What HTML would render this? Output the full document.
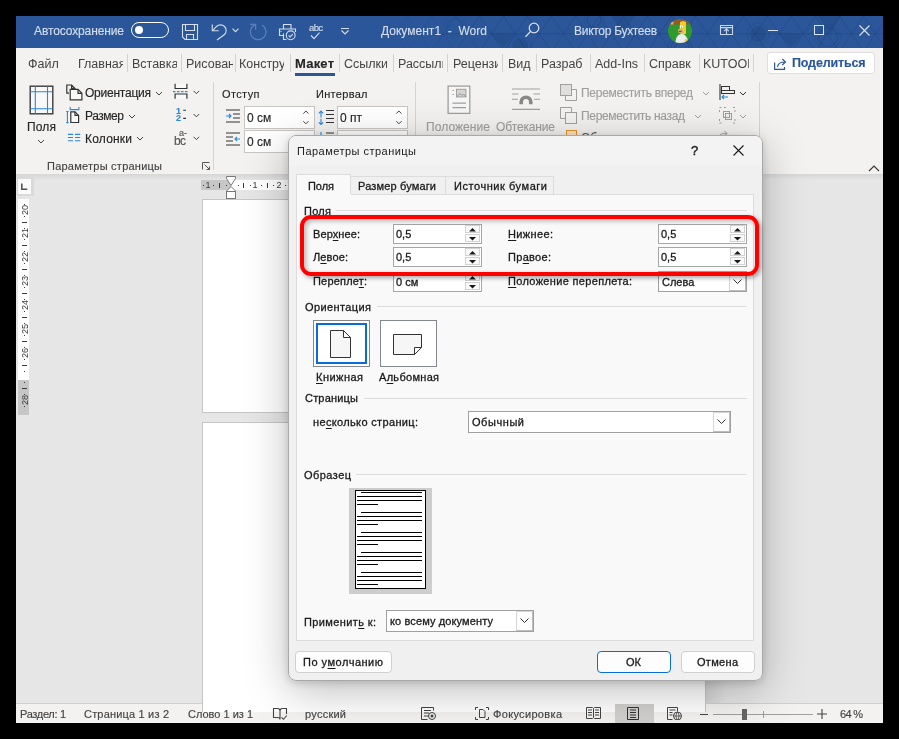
<!DOCTYPE html><html><head><meta charset="utf-8"><style>
html,body{margin:0;padding:0;background:#000;width:899px;height:739px;overflow:hidden;position:relative;font-family:"Liberation Sans",sans-serif;}
.t{position:absolute;white-space:pre;will-change:transform;}
.r{position:absolute;}
u{text-decoration:underline;text-underline-offset:2px;text-decoration-thickness:1px;}
</style></head><body>
<div class="r" style="left:16px;top:16px;width:867px;height:707px;background:#e6e6e6;"></div>
<div class="r" style="left:16px;top:16px;width:867px;height:32px;background:#2b579a;"></div>
<div class="r" style="left:16px;top:48px;width:867px;height:126px;background:#f3f2f1;"></div>
<div class="r" style="left:16px;top:174px;width:867px;height:6px;background:linear-gradient(#d6d6d6,#e6e6e6);"></div>
<div class="r" style="left:16px;top:703px;width:867px;height:20px;background:#f3f2f1;border-top:1px solid #d2d0ce;box-sizing:border-box;"></div>
<svg class="r" style="left:363px;top:16px;" width="520" height="32" viewBox="0 0 520 32"><defs><linearGradient id="pg" x1="0" x2="1"><stop offset="0" stop-color="#fff" stop-opacity="0"/><stop offset="0.25" stop-color="#fff" stop-opacity="1"/></linearGradient><mask id="pm"><rect x="0" y="16" width="520" height="32" fill="url(#pg)"/></mask></defs><g mask="url(#pm)" transform="translate(0,-16)"><path d="M323.4 33.8L335.4 16 M323.4 33.8L311.4 16 M323.4 33.8L332.8 48 M323.4 33.8L314.0 48 M347.4 33.8L359.4 16 M347.4 33.8L335.4 16 M347.4 33.8L356.8 48 M347.4 33.8L338.0 48 M371.4 33.8L383.4 16 M371.4 33.8L359.4 16 M371.4 33.8L380.8 48 M371.4 33.8L362.0 48 M395.4 33.8L407.4 16 M395.4 33.8L383.4 16 M395.4 33.8L404.8 48 M395.4 33.8L386.0 48 M419.4 33.8L431.4 16 M419.4 33.8L407.4 16 M419.4 33.8L428.8 48 M419.4 33.8L410.0 48 M443.4 33.8L455.4 16 M443.4 33.8L431.4 16 M443.4 33.8L452.8 48 M443.4 33.8L434.0 48 M467.4 33.8L479.4 16 M467.4 33.8L455.4 16 M467.4 33.8L476.8 48 M467.4 33.8L458.0 48 M491.4 33.8L503.4 16 M491.4 33.8L479.4 16 M491.4 33.8L500.8 48 M491.4 33.8L482.0 48 M515.4 33.8L527.4 16 M515.4 33.8L503.4 16 M515.4 33.8L524.8 48 M515.4 33.8L506.0 48 M539.4 33.8L551.4 16 M539.4 33.8L527.4 16 M539.4 33.8L548.8 48 M539.4 33.8L530.0 48 M563.4 33.8L575.4 16 M563.4 33.8L551.4 16 M563.4 33.8L572.8 48 M563.4 33.8L554.0 48 M587.4 33.8L599.4 16 M587.4 33.8L575.4 16 M587.4 33.8L596.8 48 M587.4 33.8L578.0 48 M611.4 33.8L623.4 16 M611.4 33.8L599.4 16 M611.4 33.8L620.8 48 M611.4 33.8L602.0 48 M635.4 33.8L647.4 16 M635.4 33.8L623.4 16 M635.4 33.8L644.8 48 M635.4 33.8L626.0 48 M659.4 33.8L671.4 16 M659.4 33.8L647.4 16 M659.4 33.8L668.8 48 M659.4 33.8L650.0 48 M683.4 33.8L695.4 16 M683.4 33.8L671.4 16 M683.4 33.8L692.8 48 M683.4 33.8L674.0 48 M707.4 33.8L719.4 16 M707.4 33.8L695.4 16 M707.4 33.8L716.8 48 M707.4 33.8L698.0 48 M731.4 33.8L743.4 16 M731.4 33.8L719.4 16 M731.4 33.8L740.8 48 M731.4 33.8L722.0 48 M755.4 33.8L767.4 16 M755.4 33.8L743.4 16 M755.4 33.8L764.8 48 M755.4 33.8L746.0 48 M779.4 33.8L791.4 16 M779.4 33.8L767.4 16 M779.4 33.8L788.8 48 M779.4 33.8L770.0 48 M803.4 33.8L815.4 16 M803.4 33.8L791.4 16 M803.4 33.8L812.8 48 M803.4 33.8L794.0 48 M827.4 33.8L839.4 16 M827.4 33.8L815.4 16 M827.4 33.8L836.8 48 M827.4 33.8L818.0 48 M851.4 33.8L863.4 16 M851.4 33.8L839.4 16 M851.4 33.8L860.8 48 M851.4 33.8L842.0 48 M875.4 33.8L887.4 16 M875.4 33.8L863.4 16 M875.4 33.8L884.8 48 M875.4 33.8L866.0 48 M899.4 33.8L911.4 16 M899.4 33.8L887.4 16 M899.4 33.8L908.8 48 M899.4 33.8L890.0 48 M923.4 33.8L935.4 16 M923.4 33.8L911.4 16 M923.4 33.8L932.8 48 M923.4 33.8L914.0 48  M0 33.8H900" stroke="#1c3f77" stroke-opacity=".4" stroke-width="1" fill="none" transform="translate(-363,0)"/><circle cx="395" cy="34" r="8" fill="#1c3f77" fill-opacity=".32"/><circle cx="395" cy="34" r="11" fill="none" stroke="#1c3f77" stroke-opacity=".25"/><circle cx="465" cy="37" r="9.5" fill="none" stroke="#1c3f77" stroke-opacity=".4" stroke-width="1.2"/><circle cx="465" cy="37" r="12.5" fill="none" stroke="#1c3f77" stroke-opacity=".22"/><circle cx="231" cy="20" r="7" fill="none" stroke="#1c3f77" stroke-opacity=".4" stroke-width="1.2"/><circle cx="231" cy="20" r="10" fill="none" stroke="#1c3f77" stroke-opacity=".22"/><circle cx="317" cy="48" r="9" fill="none" stroke="#1c3f77" stroke-opacity=".4" stroke-width="1.2"/><circle cx="317" cy="48" r="12" fill="none" stroke="#1c3f77" stroke-opacity=".22"/><circle cx="92" cy="26" r="8" fill="none" stroke="#1c3f77" stroke-opacity=".4" stroke-width="1.2"/><circle cx="92" cy="26" r="11" fill="none" stroke="#1c3f77" stroke-opacity=".22"/><circle cx="157" cy="46" r="8" fill="#1c3f77" fill-opacity=".32"/><circle cx="157" cy="46" r="11" fill="none" stroke="#1c3f77" stroke-opacity=".25"/><path d="M416 33.8L440 33.8L428 48Z" fill="#1c3f77" fill-opacity=".3"/><path d="M455 16L479 16L467 33.8Z" fill="#1c3f77" fill-opacity=".3"/><path d="M248 16L272 16L260 33.8Z" fill="#1c3f77" fill-opacity=".3"/><path d="M128 33.8L152 33.8L140 48Z" fill="#1c3f77" fill-opacity=".3"/></g></svg>
<div class="t" style="left:34.0px;top:24.84px;font-size:12px;line-height:12px;color:#d3ddeb;letter-spacing:-0.113px;-webkit-text-stroke-width:0.15px;">Автосохранение</div>
<div class="r" style="left:131px;top:22px;width:38px;height:16px;border:1.3px solid #fff;border-radius:8px;box-sizing:border-box;"></div>
<div class="r" style="left:135px;top:26px;width:8px;height:8px;background:#fff;border-radius:50%;"></div>
<svg class="r" style="left:181px;top:23px;" width="18" height="18" viewBox="0 0 18 18"><path d="M1.5 1.5H16.5V16.5H4L1.5 14Z M4.5 1.5V7.5H13.5V1.5 M5.5 16.5V11.5H12.5V16.5" fill="none" stroke="#d5deeb" stroke-width="1.1"/></svg>
<svg class="r" style="left:210px;top:22px;" width="20" height="20" viewBox="0 0 20 20"><path d="M2.3 2.4V8.8H8.7" fill="none" stroke="#d5deeb" stroke-width="1.1"/><path d="M2.5 8.8L6.5 4.5A5.5 5.5 0 0 1 14.5 12.5L7 18" fill="none" stroke="#d5deeb" stroke-width="1.1"/></svg>
<svg class="r" style="left:231px;top:27px;" width="9" height="7" viewBox="0 0 9 7"><path d="M1.5 1.7l3 3 3-3" fill="none" stroke="#d5deeb" stroke-width="1.1"/></svg>
<svg class="r" style="left:246px;top:20px;" width="24" height="24" viewBox="0 0 24 24"><path d="M16.2 5.2A7.8 7.8 0 1 1 9.4 4.6 M4.1 4.4H9.6V9.7" fill="none" stroke="#5a80ba" stroke-width="1.2"/></svg>
<svg class="r" style="left:278px;top:23px;" width="19" height="18" viewBox="0 0 19 18"><path d="M5.5 6V1.5h7.5V6 M5.5 12.5H1.5V6h16v3 M5.5 10.5v6h3" fill="none" stroke="#d5deeb" stroke-width="1.1"/><circle cx="3" cy="8.3" r=".6" fill="#d5deeb"/><circle cx="12.7" cy="12.3" r="4.4" fill="#2b579a" stroke="#d5deeb" stroke-width="1.1"/><path d="M10.6 12.4l1.5 1.5 2.7-2.8" fill="none" stroke="#d5deeb" stroke-width="1.1"/></svg>
<div class="t" style="left:308.5px;top:22.76px;font-size:9.5px;line-height:9.5px;color:#d5deeb;letter-spacing:-0.658px;-webkit-text-stroke-width:0.15px;">abc</div>
<svg class="r" style="left:310px;top:32px;" width="12" height="8" viewBox="0 0 12 8"><path d="M1 3.5l3 3.2 5.5-6" fill="none" stroke="#d5deeb" stroke-width="1.1"/></svg>
<svg class="r" style="left:340px;top:27px;" width="10" height="8" viewBox="0 0 10 8"><path d="M1 1.5h8 M1.5 3.5l3.5 3.5 3.5-3.5" fill="none" stroke="#d5deeb" stroke-width="1.1"/></svg>
<div class="t" style="left:381.0px;top:24.84px;font-size:12px;line-height:12px;color:#d3ddeb;letter-spacing:0.018px;-webkit-text-stroke-width:0.15px;">Документ1  -  Word</div>
<svg class="r" style="left:524px;top:22px;" width="16" height="17" viewBox="0 0 16 17"><circle cx="10" cy="6" r="4.8" fill="none" stroke="#dbe3ef" stroke-width="1.2"/><path d="M6.6 9.4L1.5 14.8" stroke="#dbe3ef" stroke-width="1.3"/></svg>
<div class="t" style="left:574.0px;top:24.84px;font-size:12px;line-height:12px;color:#d3ddeb;letter-spacing:-0.284px;-webkit-text-stroke-width:0.15px;">Виктор Бухтеев</div>
<svg class="r" style="left:668px;top:19px;" width="24" height="24" viewBox="0 0 24 24"><defs><clipPath id="av"><circle cx="12" cy="12" r="12"/></clipPath></defs><g clip-path="url(#av)"><rect width="24" height="24" fill="#2e9a2e"/><rect width="24" height="5.5" fill="#8f5a2e"/><rect x="2.5" y="2.5" width="3" height="3" fill="#d8a878"/><path d="M12 3.2C13 2.2 17 2 18 3.2V14.5C17.5 15.5 14 16 12.5 15V13.5L11 11.5 11.8 9.5Z" fill="#f2cc30"/><path d="M10.2 10.2C11 9.6 14 9.7 15 10.5V13.8C14 14.5 11 14.4 10.2 13.5Z" fill="#d2b070"/><path d="M11 12.4h2.5" stroke="#3a2a10" stroke-width=".8"/><ellipse cx="13.3" cy="7.7" rx="1.6" ry="1.5" fill="#fff"/><circle cx="13.6" cy="7.9" r=".5" fill="#222"/><path d="M7.4 24C7.8 18 10 15 13.5 15S19.6 18 19.9 24Z" fill="#ecebf2"/><path d="M16.5 20.5L19.8 19.5 19.8 23 16.8 23Z" fill="#f2cc30"/></g></svg>
<svg class="r" style="left:719px;top:24px;" width="15" height="12" viewBox="0 0 15 12"><path d="M1.5 1.5h12v9h-12z M1.5 3.6h12 M7.5 10.5V4.8 M5.2 7.1L7.5 4.8 9.8 7.1" fill="none" stroke="#c9d5e8" stroke-width="1.1"/></svg>
<div class="r" style="left:768px;top:30px;width:10px;height:1px;background:#dbe3ef;"></div>
<div class="r" style="left:814px;top:25px;width:10px;height:10px;border:1px solid #dbe3ef;box-sizing:border-box;"></div>
<svg class="r" style="left:859px;top:25px;" width="11" height="11" viewBox="0 0 11 11"><path d="M.5 .5l10 10 M10.5 .5l-10 10" stroke="#dbe3ef" stroke-width="1.1"/></svg>
<div class="t" style="left:28px;top:53px;width:30px;overflow:hidden;font-size:12.5px;line-height:22px;color:#444;">Файл</div>
<div class="t" style="left:78px;top:53px;width:45px;overflow:hidden;font-size:12.5px;line-height:22px;color:#444;">Главная</div>
<div class="r" style="left:127px;top:54px;width:1px;height:18px;background:#d4d2d0;"></div>
<div class="t" style="left:132px;top:53px;width:45px;overflow:hidden;font-size:12.5px;line-height:22px;color:#444;">Вставка</div>
<div class="r" style="left:181px;top:54px;width:1px;height:18px;background:#d4d2d0;"></div>
<div class="t" style="left:186px;top:53px;width:47px;overflow:hidden;font-size:12.5px;line-height:22px;color:#444;">Рисован</div>
<div class="r" style="left:235px;top:54px;width:1px;height:18px;background:#d4d2d0;"></div>
<div class="t" style="left:239px;top:53px;width:45px;overflow:hidden;font-size:12.5px;line-height:22px;color:#444;">Констру</div>
<div class="r" style="left:290px;top:54px;width:1px;height:18px;background:#d4d2d0;"></div>
<div class="t" style="left:344px;top:53px;width:43px;overflow:hidden;font-size:12.5px;line-height:22px;color:#444;">Ссылки</div>
<div class="r" style="left:339px;top:54px;width:1px;height:18px;background:#d4d2d0;"></div>
<div class="t" style="left:398px;top:53px;width:45px;overflow:hidden;font-size:12.5px;line-height:22px;color:#444;">Рассылк</div>
<div class="r" style="left:393px;top:54px;width:1px;height:18px;background:#d4d2d0;"></div>
<div class="t" style="left:453px;top:53px;width:45px;overflow:hidden;font-size:12.5px;line-height:22px;color:#444;">Рецензи</div>
<div class="r" style="left:447px;top:54px;width:1px;height:18px;background:#d4d2d0;"></div>
<div class="t" style="left:508px;top:53px;width:24px;overflow:hidden;font-size:12.5px;line-height:22px;color:#444;">Вид</div>
<div class="r" style="left:502px;top:54px;width:1px;height:18px;background:#d4d2d0;"></div>
<div class="t" style="left:541px;top:53px;width:45px;overflow:hidden;font-size:12.5px;line-height:22px;color:#444;">Разраб</div>
<div class="r" style="left:536px;top:54px;width:1px;height:18px;background:#d4d2d0;"></div>
<div class="t" style="left:595px;top:53px;width:45px;overflow:hidden;font-size:12.5px;line-height:22px;color:#444;">Add-Ins</div>
<div class="r" style="left:590px;top:54px;width:1px;height:18px;background:#d4d2d0;"></div>
<div class="t" style="left:649px;top:53px;width:45px;overflow:hidden;font-size:12.5px;line-height:22px;color:#444;">Справк</div>
<div class="r" style="left:644px;top:54px;width:1px;height:18px;background:#d4d2d0;"></div>
<div class="t" style="left:703px;top:53px;width:46px;overflow:hidden;font-size:12.5px;line-height:22px;color:#444;">KUTOOL</div>
<div class="r" style="left:699px;top:54px;width:1px;height:18px;background:#d4d2d0;"></div>
<div class="r" style="left:753px;top:54px;width:1px;height:18px;background:#d4d2d0;"></div>
<div class="t" style="left:295.0px;top:56.99px;font-size:13px;line-height:13px;color:#262626;letter-spacing:0.213px;font-weight:bold;-webkit-text-stroke-width:0.15px;">Макет</div>
<div class="r" style="left:295px;top:73px;width:40px;height:3px;background:#2b579a;"></div>
<div class="r" style="left:767px;top:52px;width:108px;height:22px;background:#fff;border:1px solid #e1dfdd;border-radius:3px;box-sizing:border-box;"></div>
<svg class="r" style="left:774px;top:57px;" width="14" height="13" viewBox="0 0 14 13"><path d="M.6 5.5V12.4H10.5V10 M3.5 10c.5-3.5 3-5 7-5 M8.3 2l3.2 3-3.2 3" fill="none" stroke="#2b579a" stroke-width="1.2"/></svg>
<div class="t" style="left:792.0px;top:57.42px;font-size:12.5px;line-height:12.5px;color:#2b579a;letter-spacing:-0.169px;font-weight:bold;-webkit-text-stroke-width:0.15px;">Поделиться</div>
<svg class="r" style="left:29px;top:85px;" width="25" height="30" viewBox="0 0 25 30"><rect x="1.2" y="1.2" width="22.6" height="27.6" fill="#f8f8f8" stroke="#3b3b3b" stroke-width="1.4"/><path d="M6.3 1.5v27 M18.5 1.5v27 M1.5 6.7h22 M1.5 23.7h22" stroke="#2b88d8" stroke-width="1.1"/></svg>
<div class="t" style="left:27.0px;top:120.84px;font-size:12px;line-height:12px;color:#262626;letter-spacing:0.155px;-webkit-text-stroke-width:0.15px;">Поля</div>
<svg class="r" style="left:37px;top:139px;" width="8" height="5" viewBox="0 0 8 5"><path d="M1 1l3 3 3-3" fill="none" stroke="#444" stroke-width="1"/></svg>
<svg class="r" style="left:62px;top:82px;" width="24" height="64" viewBox="0 0 24 64"><path d="M7 11.2H4.8V3H9.6L13 6.4V7.4 M9.6 3V6.4H13" fill="none" stroke="#333" stroke-width="1.2"/><path d="M8.2 7.4H16L19.9 11.3V17.8H8.2Z" fill="#f8f8f8" stroke="#333" stroke-width="1.2"/><path d="M16 7.4V11.3H19.9" fill="none" stroke="#333" stroke-width="1.2"/><path d="M5.4 29.5V40.7 M4.2 29.5H6.6 M4.2 40.6H6.6 M8.2 27.6H16.9 M8.2 25.1V28.2 M16.9 25.1V28.2" fill="none" stroke="#2b88d8" stroke-width="1.1"/><path d="M8.8 29.8H13L16.6 33.4V40.5H8.8Z" fill="#f8f8f8" stroke="#333" stroke-width="1.2"/><path d="M13 29.8V33.4H16.6" fill="none" stroke="#333" stroke-width="1.2"/><path d="M5.9 52.4H11.1 M5.9 55.5H11.1 M5.9 58.8H11.1 M13 52.4H18.2 M13 55.5H18.2 M13 58.8H18.2" stroke="#2b88d8" stroke-width="1.1"/></svg>
<div class="t" style="left:85.0px;top:86.84px;font-size:12px;line-height:12px;color:#262626;letter-spacing:-0.236px;-webkit-text-stroke-width:0.15px;">Ориентация</div>
<svg class="r" style="left:155px;top:91px;" width="8" height="5" viewBox="0 0 8 5"><path d="M1 1l3 3 3-3" fill="none" stroke="#444" stroke-width="1"/></svg>
<div class="t" style="left:85.0px;top:109.84px;font-size:12px;line-height:12px;color:#262626;letter-spacing:-0.449px;-webkit-text-stroke-width:0.15px;">Размер</div>
<svg class="r" style="left:128px;top:114px;" width="8" height="5" viewBox="0 0 8 5"><path d="M1 1l3 3 3-3" fill="none" stroke="#444" stroke-width="1"/></svg>
<div class="t" style="left:85.0px;top:132.84px;font-size:12px;line-height:12px;color:#262626;letter-spacing:0.202px;-webkit-text-stroke-width:0.15px;">Колонки</div>
<svg class="r" style="left:136px;top:136px;" width="8" height="5" viewBox="0 0 8 5"><path d="M1 1l3 3 3-3" fill="none" stroke="#444" stroke-width="1"/></svg>
<svg class="r" style="left:168px;top:80px;" width="36" height="70" viewBox="0 0 36 70"><path d="M7.1 3.8V8.5H18.9V3.8 M7.1 18.8V14H18.9V18.8" fill="#f8f8f8" stroke="#333" stroke-width="1.2"/><path d="M4.9 11.6H19.9" stroke="#2b88d8" stroke-width="1.1" stroke-dasharray="2.6 1.4"/><path d="M25.6 10.9l2.8 2.8 2.8-2.8 M25.6 34l2.8 2.8 2.8-2.8 M25.6 56.8l2.8 2.8 2.8-2.8" fill="none" stroke="#444" stroke-width="1"/><path d="M15.2 30.3H18 M15.2 38.4H18" stroke="#333" stroke-width="1.1"/></svg>
<div class="t" style="left:175.5px;top:106.78px;font-size:9px;line-height:9px;color:#2b88d8;letter-spacing:0.000px;font-weight:bold;-webkit-text-stroke-width:0.15px;">1</div>
<div class="t" style="left:175.5px;top:114.38px;font-size:9px;line-height:9px;color:#2b88d8;letter-spacing:0.000px;font-weight:bold;-webkit-text-stroke-width:0.15px;">2</div>
<div class="t" style="left:179.0px;top:129.18px;font-size:9px;line-height:9px;color:#555;letter-spacing:0.000px;-webkit-text-stroke-width:0.15px;">a-</div>
<div class="t" style="left:173.5px;top:134.74px;font-size:12px;line-height:12px;color:#555;letter-spacing:-0.673px;-webkit-text-stroke-width:0.15px;">bc</div>
<div class="t" style="left:47.0px;top:160.69px;font-size:11px;line-height:11px;color:#444;letter-spacing:0.242px;-webkit-text-stroke-width:0.15px;">Параметры страницы</div>
<svg class="r" style="left:202px;top:162px;" width="8" height="8" viewBox="0 0 8 8"><path d="M.5 7.5V.5h7 M2.5 2.5l5 5 M4.5 7.5h3v-3" fill="none" stroke="#555" stroke-width="1"/></svg>
<div class="r" style="left:213px;top:82px;width:1px;height:88px;background:#d6d4d2;"></div>
<div class="t" style="left:222.0px;top:88.69px;font-size:11px;line-height:11px;color:#262626;letter-spacing:0.383px;-webkit-text-stroke-width:0.15px;">Отступ</div>
<div class="t" style="left:315.5px;top:88.69px;font-size:11px;line-height:11px;color:#262626;letter-spacing:0.302px;-webkit-text-stroke-width:0.15px;">Интервал</div>
<svg class="r" style="left:226px;top:109px;" width="14" height="14" viewBox="0 0 14 14"><path d="M0 1h14 M7 5h7 M7 9h7 M0 13h14" stroke="#333" stroke-width="1.1"/><path d="M0 7h5 M3 5l2 2-2 2" fill="none" stroke="#1e8bdb" stroke-width="1.1"/></svg>
<svg class="r" style="left:226px;top:132px;" width="14" height="14" viewBox="0 0 14 14"><path d="M0 1h14 M0 5h7 M0 9h7 M0 13h14" stroke="#333" stroke-width="1.1"/><path d="M14 7H9 M11 5L9 7l2 2" fill="none" stroke="#1e8bdb" stroke-width="1.1"/></svg>
<svg class="r" style="left:318px;top:131px;" width="16" height="16" viewBox="0 0 16 16"><path d="M3 1v14 M1 13l2 2 2-2" fill="none" stroke="#1e8bdb" stroke-width="1.1"/><path d="M8 2h8 M8 6h8" stroke="#333" stroke-width="1.1"/></svg>
<svg class="r" style="left:318px;top:108px;" width="16" height="17" viewBox="0 0 16 17"><path d="M3 3v6.5 M.8 5.3L3 3 5.2 5.3 M3 10.8v6 M.8 14.3L3 16.5 5.2 14.3" fill="none" stroke="#2b88d8" stroke-width="1.1"/><path d="M8 2.5h8 M8 6.5h8 M8 10.5h8 M8 14.5h8" stroke="#333" stroke-width="1.1"/></svg>
<div class="r" style="left:244px;top:106px;width:71px;height:23px;background:#fff;border:1px solid #c8c6c4;box-sizing:border-box;"></div>
<div class="t" style="left:247.0px;top:111.84px;font-size:12px;line-height:12px;color:#262626;letter-spacing:0.000px;-webkit-text-stroke-width:0.15px;">0 см</div>
<svg class="r" style="left:302px;top:109px;" width="8" height="18" viewBox="0 0 8 18"><path d="M1.3 4.6L3.9 2L6.5 4.6 M1.3 12.2L3.9 14.8L6.5 12.2" fill="none" stroke="#444" stroke-width="1"/></svg>
<div class="r" style="left:337px;top:106px;width:71px;height:23px;background:#fff;border:1px solid #c8c6c4;box-sizing:border-box;"></div>
<div class="t" style="left:340.0px;top:111.84px;font-size:12px;line-height:12px;color:#262626;letter-spacing:0.000px;-webkit-text-stroke-width:0.15px;">0 пт</div>
<svg class="r" style="left:395px;top:109px;" width="8" height="18" viewBox="0 0 8 18"><path d="M1.3 4.6L3.9 2L6.5 4.6 M1.3 12.2L3.9 14.8L6.5 12.2" fill="none" stroke="#444" stroke-width="1"/></svg>
<div class="r" style="left:244px;top:130px;width:71px;height:23px;background:#fff;border:1px solid #c8c6c4;box-sizing:border-box;"></div>
<div class="t" style="left:247.0px;top:135.84px;font-size:12px;line-height:12px;color:#262626;letter-spacing:0.000px;-webkit-text-stroke-width:0.15px;">0 см</div>
<svg class="r" style="left:302px;top:133px;" width="8" height="18" viewBox="0 0 8 18"><path d="M1.3 4.6L3.9 2L6.5 4.6 M1.3 12.2L3.9 14.8L6.5 12.2" fill="none" stroke="#444" stroke-width="1"/></svg>
<div class="r" style="left:337px;top:130px;width:71px;height:23px;background:#fff;border:1px solid #c8c6c4;box-sizing:border-box;"></div>
<div class="t" style="left:340.0px;top:135.84px;font-size:12px;line-height:12px;color:#262626;letter-spacing:0.000px;-webkit-text-stroke-width:0.15px;">0 пт</div>
<svg class="r" style="left:395px;top:133px;" width="8" height="18" viewBox="0 0 8 18"><path d="M1.3 4.6L3.9 2L6.5 4.6 M1.3 12.2L3.9 14.8L6.5 12.2" fill="none" stroke="#444" stroke-width="1"/></svg>
<div class="r" style="left:415px;top:82px;width:1px;height:88px;background:#d6d4d2;"></div>
<svg class="r" style="left:447px;top:85px;" width="24" height="30" viewBox="0 0 24 30"><rect x="1.1" y="1.1" width="21.7" height="27.3" fill="#f6f6f6" stroke="#a19f9d" stroke-width="1.3"/><rect x="9.5" y="4.3" width="9.4" height="7.6" fill="#d6d4d2" stroke="#a19f9d" stroke-width="1"/><path d="M10 11.5l3-3 2 2 1.5-1.5 2.5 2.5" fill="none" stroke="#8a8886" stroke-width=".9"/><path d="M5.5 5.5h1.5 M5.5 9.5h1.5 M5.5 18.1h13.5 M5.5 22.6h13.5" stroke="#a19f9d" stroke-width="1.1"/></svg>
<div class="t" style="left:426.0px;top:120.84px;font-size:12px;line-height:12px;color:#a19f9d;letter-spacing:0.073px;-webkit-text-stroke-width:0.15px;">Положение</div>
<svg class="r" style="left:511px;top:88px;" width="30" height="23" viewBox="0 0 30 23"><path d="M1 1h28 M1 21.4h28 M1 6h6.5 M22.5 6h6.5 M1 11.2h6 M23 11.2h6" stroke="#a19f9d" stroke-width="1.1"/><path d="M10.2 16.2V14a4.8 4.8 0 0 1 9.6 0v2.2" fill="none" stroke="#8a8886" stroke-width="3.6"/></svg>
<div class="t" style="left:496.0px;top:120.84px;font-size:12px;line-height:12px;color:#a19f9d;letter-spacing:-0.179px;-webkit-text-stroke-width:0.15px;">Обтекание</div>
<svg class="r" style="left:560px;top:84px;" width="18" height="17" viewBox="0 0 18 17"><rect x=".5" y=".5" width="11" height="11" fill="#e1dfdd" stroke="#a19f9d"/><path d="M12 5.5h4.5v11h-11V12" fill="none" stroke="#a19f9d"/></svg>
<div class="t" style="left:581.0px;top:86.84px;font-size:12px;line-height:12px;color:#a19f9d;letter-spacing:-0.264px;-webkit-text-stroke-width:0.15px;">Переместить вперед</div>
<svg class="r" style="left:702px;top:91px;" width="8" height="5" viewBox="0 0 8 5"><path d="M1 1l3 3 3-3" fill="none" stroke="#a19f9d" stroke-width="1"/></svg>
<svg class="r" style="left:560px;top:107px;" width="18" height="17" viewBox="0 0 18 17"><path d="M.5 .5h11v5 M.5 .5v11h5" fill="none" stroke="#a19f9d"/><rect x="5.5" y="5.5" width="11" height="11" fill="#f3f2f1" stroke="#a19f9d"/></svg>
<div class="t" style="left:581.0px;top:109.84px;font-size:12px;line-height:12px;color:#a19f9d;letter-spacing:-0.325px;-webkit-text-stroke-width:0.15px;">Переместить назад</div>
<svg class="r" style="left:694px;top:114px;" width="8" height="5" viewBox="0 0 8 5"><path d="M1 1l3 3 3-3" fill="none" stroke="#a19f9d" stroke-width="1"/></svg>
<div class="r" style="left:566px;top:130px;width:11px;height:8px;background:#fde7c2;border:1.2px solid #e8912a;box-sizing:border-box;"></div>
<div class="t" style="left:581.0px;top:131.84px;font-size:12px;line-height:12px;color:#555;letter-spacing:0.000px;-webkit-text-stroke-width:0.15px;">Об</div>
<svg class="r" style="left:719px;top:84px;" width="17" height="16" viewBox="0 0 17 16"><path d="M1 0v16" stroke="#333" stroke-width="1.1"/><rect x="2.5" y="2.5" width="8" height="4" fill="none" stroke="#333"/><rect x="2.5" y="6.5" width="13" height="3" fill="none" stroke="#333"/><path d="M9 13H3 M5 11l-2 2 2 2" fill="none" stroke="#1e8bdb" stroke-width="1.1"/></svg>
<svg class="r" style="left:739px;top:91px;" width="8" height="5" viewBox="0 0 8 5"><path d="M1 1l3 3 3-3" fill="none" stroke="#333" stroke-width="1"/></svg>
<svg class="r" style="left:719px;top:107px;" width="17" height="17" viewBox="0 0 17 17"><path d="M.5 .5h2 M5 .5h2 M.5 3v2 M14 .5h2 M16 3v2 M.5 12v2 M.5 16h2 M14 16h2 M16 12v2" stroke="#a19f9d"/><rect x="4.5" y="4.5" width="6" height="6" fill="none" stroke="#a19f9d"/><rect x="6.5" y="6.5" width="6" height="6" fill="none" stroke="#a19f9d"/></svg>
<svg class="r" style="left:739px;top:114px;" width="8" height="5" viewBox="0 0 8 5"><path d="M1 1l3 3 3-3" fill="none" stroke="#a19f9d" stroke-width="1"/></svg>
<svg class="r" style="left:718px;top:130px;" width="14" height="8" viewBox="0 0 14 8"><path d="M1 7C2 4 4 3.5 9 3.5 M6.5 1l2.5 2.5L6.5 6 M12 7.5h1" fill="none" stroke="#a19f9d"/></svg>
<div class="r" style="left:759px;top:82px;width:1px;height:89px;background:#d6d4d2;"></div>
<svg class="r" style="left:868px;top:164px;" width="12" height="8" viewBox="0 0 12 8"><path d="M1 7l5-5 5 5" fill="none" stroke="#333" stroke-width="1.1"/></svg>
<div class="r" style="left:17px;top:176px;width:17px;height:20px;background:#dadada;"></div>
<div class="r" style="left:18px;top:179px;width:13px;height:15px;background:#fbfbfb;"></div>
<svg class="r" style="left:20px;top:183px;" width="8" height="8" viewBox="0 0 8 8"><path d="M1.8 0.5v5.8h5.5" fill="none" stroke="#555" stroke-width="1.6"/></svg>
<div class="r" style="left:18px;top:199px;width:11px;height:181px;background:#fff;"></div>
<div class="r" style="left:18px;top:380px;width:11px;height:35px;background:#c6c6c6;"></div>
<div class="t" style="left:12.5px;top:204.6px;width:24px;height:10px;font-size:9px;line-height:10px;text-align:center;color:#3a3a3a;transform:rotate(-90deg);">20</div>
<div class="r" style="left:24px;top:216px;width:1px;height:1px;background:#3a3a3a;"></div>
<div class="r" style="left:22px;top:222px;width:5px;height:1px;background:#3a3a3a;"></div>
<div class="r" style="left:24px;top:228px;width:1px;height:1px;background:#3a3a3a;"></div>
<div class="r" style="left:24px;top:204px;width:1px;height:1px;background:#3a3a3a;"></div>
<div class="t" style="left:12.5px;top:228.45px;width:24px;height:10px;font-size:9px;line-height:10px;text-align:center;color:#3a3a3a;transform:rotate(-90deg);">21</div>
<div class="r" style="left:24px;top:239px;width:1px;height:1px;background:#3a3a3a;"></div>
<div class="r" style="left:22px;top:245px;width:5px;height:1px;background:#3a3a3a;"></div>
<div class="r" style="left:24px;top:251px;width:1px;height:1px;background:#3a3a3a;"></div>
<div class="r" style="left:24px;top:228px;width:1px;height:1px;background:#3a3a3a;"></div>
<div class="t" style="left:12.5px;top:252.3px;width:24px;height:10px;font-size:9px;line-height:10px;text-align:center;color:#3a3a3a;transform:rotate(-90deg);">22</div>
<div class="r" style="left:24px;top:263px;width:1px;height:1px;background:#3a3a3a;"></div>
<div class="r" style="left:22px;top:269px;width:5px;height:1px;background:#3a3a3a;"></div>
<div class="r" style="left:24px;top:275px;width:1px;height:1px;background:#3a3a3a;"></div>
<div class="r" style="left:24px;top:251px;width:1px;height:1px;background:#3a3a3a;"></div>
<div class="t" style="left:12.5px;top:276.15px;width:24px;height:10px;font-size:9px;line-height:10px;text-align:center;color:#3a3a3a;transform:rotate(-90deg);">23</div>
<div class="r" style="left:24px;top:287px;width:1px;height:1px;background:#3a3a3a;"></div>
<div class="r" style="left:22px;top:293px;width:5px;height:1px;background:#3a3a3a;"></div>
<div class="r" style="left:24px;top:299px;width:1px;height:1px;background:#3a3a3a;"></div>
<div class="r" style="left:24px;top:275px;width:1px;height:1px;background:#3a3a3a;"></div>
<div class="t" style="left:12.5px;top:300.0px;width:24px;height:10px;font-size:9px;line-height:10px;text-align:center;color:#3a3a3a;transform:rotate(-90deg);">24</div>
<div class="r" style="left:24px;top:311px;width:1px;height:1px;background:#3a3a3a;"></div>
<div class="r" style="left:22px;top:317px;width:5px;height:1px;background:#3a3a3a;"></div>
<div class="r" style="left:24px;top:323px;width:1px;height:1px;background:#3a3a3a;"></div>
<div class="r" style="left:24px;top:299px;width:1px;height:1px;background:#3a3a3a;"></div>
<div class="t" style="left:12.5px;top:323.85px;width:24px;height:10px;font-size:9px;line-height:10px;text-align:center;color:#3a3a3a;transform:rotate(-90deg);">25</div>
<div class="r" style="left:24px;top:335px;width:1px;height:1px;background:#3a3a3a;"></div>
<div class="r" style="left:22px;top:341px;width:5px;height:1px;background:#3a3a3a;"></div>
<div class="r" style="left:24px;top:347px;width:1px;height:1px;background:#3a3a3a;"></div>
<div class="r" style="left:24px;top:323px;width:1px;height:1px;background:#3a3a3a;"></div>
<div class="t" style="left:12.5px;top:347.70000000000005px;width:24px;height:10px;font-size:9px;line-height:10px;text-align:center;color:#3a3a3a;transform:rotate(-90deg);">26</div>
<div class="r" style="left:24px;top:359px;width:1px;height:1px;background:#3a3a3a;"></div>
<div class="r" style="left:22px;top:365px;width:5px;height:1px;background:#3a3a3a;"></div>
<div class="r" style="left:24px;top:371px;width:1px;height:1px;background:#3a3a3a;"></div>
<div class="r" style="left:24px;top:347px;width:1px;height:1px;background:#3a3a3a;"></div>
<div class="r" style="left:24px;top:382px;width:1px;height:1px;background:#3a3a3a;"></div>
<div class="r" style="left:22px;top:388px;width:5px;height:1px;background:#3a3a3a;"></div>
<div class="r" style="left:24px;top:394px;width:1px;height:1px;background:#3a3a3a;"></div>
<div class="r" style="left:24px;top:371px;width:1px;height:1px;background:#3a3a3a;"></div>
<div class="t" style="left:12.5px;top:395.4px;width:24px;height:10px;font-size:9px;line-height:10px;text-align:center;color:#3a3a3a;transform:rotate(-90deg);">28</div>
<div class="r" style="left:24px;top:406px;width:1px;height:1px;background:#3a3a3a;"></div>
<div class="r" style="left:24px;top:394px;width:1px;height:1px;background:#3a3a3a;"></div>
<div class="r" style="left:201px;top:180px;width:30px;height:10px;background:#c6c6c6;"></div>
<div class="r" style="left:231px;top:180px;width:60px;height:10px;background:#fff;"></div>
<div class="t" style="left:202.5px;top:180px;width:10px;font-size:9px;line-height:10px;text-align:center;color:#3a3a3a;">1</div>
<div class="t" style="left:250.3px;top:180px;width:10px;font-size:9px;line-height:10px;text-align:center;color:#3a3a3a;">1</div>
<div class="t" style="left:274.2px;top:180px;width:10px;font-size:9px;line-height:10px;text-align:center;color:#3a3a3a;">2</div>
<div class="r" style="left:203px;top:185px;width:1px;height:1px;background:#3a3a3a;"></div>
<div class="r" style="left:213px;top:185px;width:1px;height:1px;background:#3a3a3a;"></div>
<div class="r" style="left:226px;top:185px;width:1px;height:1px;background:#3a3a3a;"></div>
<div class="r" style="left:238px;top:185px;width:1px;height:1px;background:#3a3a3a;"></div>
<div class="r" style="left:250px;top:185px;width:1px;height:1px;background:#3a3a3a;"></div>
<div class="r" style="left:261px;top:185px;width:1px;height:1px;background:#3a3a3a;"></div>
<div class="r" style="left:273px;top:185px;width:1px;height:1px;background:#3a3a3a;"></div>
<div class="r" style="left:285px;top:185px;width:1px;height:1px;background:#3a3a3a;"></div>
<div class="r" style="left:219px;top:183px;width:1px;height:5px;background:#3a3a3a;"></div>
<div class="r" style="left:243px;top:183px;width:1px;height:5px;background:#3a3a3a;"></div>
<div class="r" style="left:267px;top:183px;width:1px;height:5px;background:#3a3a3a;"></div>
<svg class="r" style="left:226px;top:176px;" width="11" height="24" viewBox="0 0 11 24"><path d="M.5 .5h9v2L5 9.5.5 2.5z" fill="#fff" stroke="#777"/><path d="M5 10.5L9.5 15v.5h-9V15z" fill="#fff" stroke="#777"/><rect x=".5" y="15.5" width="9" height="7" fill="#fff" stroke="#777"/></svg>
<div class="r" style="left:202px;top:199px;width:504px;height:214px;background:#fff;border:1px solid #c6c6c6;box-sizing:border-box;"></div>
<div class="r" style="left:202px;top:422px;width:504px;height:290px;background:#fff;border:1px solid #c6c6c6;border-bottom:none;box-sizing:border-box;"></div>
<div class="r" style="left:706px;top:180px;width:20px;height:523px;background:linear-gradient(90deg,#d4d4d4,#e6e6e6);"></div>
<div class="t" style="left:20.0px;top:708.69px;font-size:11px;line-height:11px;color:#444;letter-spacing:-0.323px;-webkit-text-stroke-width:0.15px;">Раздел: 1</div>
<div class="t" style="left:84.0px;top:708.69px;font-size:11px;line-height:11px;color:#444;letter-spacing:0.182px;-webkit-text-stroke-width:0.15px;">Страница 1 из 2</div>
<div class="t" style="left:188.0px;top:708.69px;font-size:11px;line-height:11px;color:#444;letter-spacing:-0.003px;-webkit-text-stroke-width:0.15px;">Слово 1 из 1</div>
<svg class="r" style="left:272px;top:707px;" width="16" height="14" viewBox="0 0 16 14"><path d="M1.5 1.5H5.5C7 1.5 8 2.5 8 4V12.5C8 11.3 7 10.5 5.5 10.5H1.5Z M8 4C8 2.5 9 1.5 10.5 1.5H14.5V7" fill="none" stroke="#444" stroke-width="1.1"/><path d="M9.5 10.3l2 2 3.3-3.8" fill="none" stroke="#444" stroke-width="1.1"/></svg>
<div class="t" style="left:305.0px;top:708.69px;font-size:11px;line-height:11px;color:#444;letter-spacing:0.254px;-webkit-text-stroke-width:0.15px;">русский</div>
<svg class="r" style="left:421px;top:707px;" width="15" height="13" viewBox="0 0 15 13"><path d="M.5 .5h12v3 M.5 .5v12h6 M3 3.5h7 M3 6h5 M3 9h4" fill="none" stroke="#444"/><circle cx="11" cy="9" r="3.5" fill="none" stroke="#444"/><circle cx="11" cy="9" r="1.5" fill="#444"/></svg>
<svg class="r" style="left:475px;top:707px;" width="14" height="13" viewBox="0 0 14 13"><path d="M.5 3V.5H3 M11 .5h2.5V3 M.5 10v2.5H3 M11 12.5h2.5V10" fill="none" stroke="#444"/><path d="M4.5 2.5h3.5l2 2v6h-5.5z" fill="none" stroke="#444"/></svg>
<div class="t" style="left:493.0px;top:708.69px;font-size:11px;line-height:11px;color:#444;letter-spacing:0.331px;-webkit-text-stroke-width:0.15px;">Фокусировка</div>
<svg class="r" style="left:586px;top:707px;" width="15" height="12" viewBox="0 0 15 12"><path d="M.5 .5h6l1 1 1-1h6v11h-6l-1-1-1 1h-6z M7.5 1.5v9 M2 3h4 M2 5.5h4 M2 8h4 M9 3h4 M9 5.5h4 M9 8h4" fill="none" stroke="#444"/></svg>
<div class="r" style="left:615px;top:704px;width:39px;height:19px;background:#d2d0ce;"></div>
<svg class="r" style="left:627px;top:707px;" width="12" height="13" viewBox="0 0 12 13"><path d="M.5 .5h11v12H.5z M3 3h6 M3 5.5h6 M3 8h6 M3 10.5h6" fill="none" stroke="#333"/></svg>
<svg class="r" style="left:667px;top:707px;" width="15" height="13" viewBox="0 0 15 13"><path d="M.5 .5h10v4 M.5 .5v12h5 M2.5 3h6 M2.5 5.5h3 M2.5 8h3" fill="none" stroke="#444"/><circle cx="10.5" cy="9" r="4" fill="none" stroke="#444"/><path d="M6.5 9h8 M10.5 5c-2 2.5-2 5.5 0 8 M10.5 5c2 2.5 2 5.5 0 8" fill="none" stroke="#444" stroke-width=".8"/></svg>
<div class="r" style="left:700px;top:714px;width:8px;height:1px;background:#444;"></div>
<div class="r" style="left:713px;top:714px;width:100px;height:1px;background:#a19f9d;"></div>
<div class="r" style="left:763px;top:711px;width:1px;height:7px;background:#a19f9d;"></div>
<div class="r" style="left:742px;top:709px;width:5px;height:11px;background:#666;"></div>
<svg class="r" style="left:817px;top:709px;" width="10" height="10" viewBox="0 0 10 10"><path d="M5 0v10 M0 5h10" stroke="#444" stroke-width="1.1"/></svg>
<div class="t" style="left:840.0px;top:709.19px;font-size:11px;line-height:11px;color:#444;letter-spacing:-0.691px;-webkit-text-stroke-width:0.15px;">64 %</div>
<div class="r" style="left:288px;top:135px;width:475px;height:546px;border-radius:8px;box-shadow:0 10px 44px rgba(0,0,0,.26), 0 2px 8px rgba(0,0,0,.16);"></div>
<div class="r" style="left:288px;top:135px;width:475px;height:546px;background:#f0f0f0;border:1px solid #a8a8a8;border-radius:8px;box-sizing:border-box;"></div>
<div class="r" style="left:289px;top:136px;width:473px;height:30px;background:#f3f3f3;border-radius:7px 7px 0 0;"></div>
<div class="t" style="left:297.0px;top:145.69px;font-size:11px;line-height:11px;color:#202020;letter-spacing:0.477px;">Параметры страницы</div>
<div class="t" style="left:691.0px;top:144.49px;font-size:13px;line-height:13px;color:#1a1a1a;letter-spacing:0.000px;-webkit-text-stroke-width:0.30px;-webkit-text-stroke:0.4px #1a1a1a;">?</div>
<svg class="r" style="left:733px;top:145px;" width="11" height="11" viewBox="0 0 11 11"><path d="M.5 .5l10 10 M10.5 .5l-10 10" stroke="#1a1a1a" stroke-width="1.1"/></svg>
<div class="r" style="left:296px;top:174px;width:55px;height:21px;background:#f9f9f9;border:1px solid #dcdcdc;border-bottom:none;box-sizing:border-box;"></div>
<div class="r" style="left:351px;top:176px;width:95px;height:18px;background:#f0f0f0;border:1px solid #dcdcdc;border-bottom:none;border-left:none;box-sizing:border-box;"></div>
<div class="r" style="left:446px;top:176px;width:108px;height:18px;background:#f0f0f0;border:1px solid #dcdcdc;border-bottom:none;border-left:none;box-sizing:border-box;"></div>
<div class="t" style="left:308.0px;top:180.69px;font-size:11px;line-height:11px;color:#1a1a1a;letter-spacing:-0.052px;-webkit-text-stroke-width:0.30px;">Поля</div>
<div class="t" style="left:358.0px;top:180.69px;font-size:11px;line-height:11px;color:#1a1a1a;letter-spacing:0.155px;-webkit-text-stroke-width:0.30px;">Размер бумаги</div>
<div class="t" style="left:454.0px;top:180.69px;font-size:11px;line-height:11px;color:#1a1a1a;letter-spacing:0.551px;-webkit-text-stroke-width:0.30px;">Источник бумаги</div>
<div class="r" style="left:296px;top:194px;width:458px;height:447px;background:#f9f9f9;border:1px solid #dcdcdc;border-top:none;box-sizing:border-box;"></div>
<div class="r" style="left:351px;top:194px;width:403px;height:1px;background:#dcdcdc;"></div>
<div class="t" style="left:304.0px;top:205.69px;font-size:11px;line-height:11px;color:#1a1a1a;letter-spacing:0.281px;-webkit-text-stroke-width:0.30px;">Поля</div>
<div class="r" style="left:336px;top:210px;width:411px;height:1px;background:#dcdcdc;"></div>
<div class="r" style="left:393px;top:224px;width:89px;height:20px;background:#fff;border:1px solid #a6a6a6;box-sizing:border-box;"></div>
<div class="t" style="left:396.0px;top:229.09px;font-size:11px;line-height:11px;color:#1a1a1a;letter-spacing:0.000px;-webkit-text-stroke-width:0.30px;">0,5</div>
<div class="r" style="left:465px;top:225px;width:15px;height:8px;border:1px solid #d2d2d2;box-sizing:border-box;background:#fafafa;"></div>
<div class="r" style="left:465px;top:234px;width:15px;height:8px;border:1px solid #d2d2d2;box-sizing:border-box;background:#fafafa;"></div>
<svg class="r" style="left:469px;top:227px;" width="7" height="14" viewBox="0 0 7 14"><path d="M0 4.4L3.5 0.9 7 4.4z M0 10L3.5 13.5 7 10z" fill="#1a1a1a"/></svg>
<div class="r" style="left:393px;top:247px;width:89px;height:20px;background:#fff;border:1px solid #a6a6a6;box-sizing:border-box;"></div>
<div class="t" style="left:396.0px;top:252.09px;font-size:11px;line-height:11px;color:#1a1a1a;letter-spacing:0.000px;-webkit-text-stroke-width:0.30px;">0,5</div>
<div class="r" style="left:465px;top:248px;width:15px;height:8px;border:1px solid #d2d2d2;box-sizing:border-box;background:#fafafa;"></div>
<div class="r" style="left:465px;top:257px;width:15px;height:8px;border:1px solid #d2d2d2;box-sizing:border-box;background:#fafafa;"></div>
<svg class="r" style="left:469px;top:250px;" width="7" height="14" viewBox="0 0 7 14"><path d="M0 4.4L3.5 0.9 7 4.4z M0 10L3.5 13.5 7 10z" fill="#1a1a1a"/></svg>
<div class="r" style="left:393px;top:272px;width:89px;height:20px;background:#fff;border:1px solid #a6a6a6;box-sizing:border-box;"></div>
<div class="t" style="left:396.0px;top:277.09px;font-size:11px;line-height:11px;color:#1a1a1a;letter-spacing:0.000px;-webkit-text-stroke-width:0.30px;">0 см</div>
<div class="r" style="left:465px;top:273px;width:15px;height:8px;border:1px solid #d2d2d2;box-sizing:border-box;background:#fafafa;"></div>
<div class="r" style="left:465px;top:282px;width:15px;height:8px;border:1px solid #d2d2d2;box-sizing:border-box;background:#fafafa;"></div>
<svg class="r" style="left:469px;top:275px;" width="7" height="14" viewBox="0 0 7 14"><path d="M0 4.4L3.5 0.9 7 4.4z M0 10L3.5 13.5 7 10z" fill="#1a1a1a"/></svg>
<div class="r" style="left:658px;top:224px;width:89px;height:20px;background:#fff;border:1px solid #a6a6a6;box-sizing:border-box;"></div>
<div class="t" style="left:661.0px;top:229.09px;font-size:11px;line-height:11px;color:#1a1a1a;letter-spacing:0.000px;-webkit-text-stroke-width:0.30px;">0,5</div>
<div class="r" style="left:730px;top:225px;width:15px;height:8px;border:1px solid #d2d2d2;box-sizing:border-box;background:#fafafa;"></div>
<div class="r" style="left:730px;top:234px;width:15px;height:8px;border:1px solid #d2d2d2;box-sizing:border-box;background:#fafafa;"></div>
<svg class="r" style="left:734px;top:227px;" width="7" height="14" viewBox="0 0 7 14"><path d="M0 4.4L3.5 0.9 7 4.4z M0 10L3.5 13.5 7 10z" fill="#1a1a1a"/></svg>
<div class="r" style="left:658px;top:247px;width:89px;height:20px;background:#fff;border:1px solid #a6a6a6;box-sizing:border-box;"></div>
<div class="t" style="left:661.0px;top:252.09px;font-size:11px;line-height:11px;color:#1a1a1a;letter-spacing:0.000px;-webkit-text-stroke-width:0.30px;">0,5</div>
<div class="r" style="left:730px;top:248px;width:15px;height:8px;border:1px solid #d2d2d2;box-sizing:border-box;background:#fafafa;"></div>
<div class="r" style="left:730px;top:257px;width:15px;height:8px;border:1px solid #d2d2d2;box-sizing:border-box;background:#fafafa;"></div>
<svg class="r" style="left:734px;top:250px;" width="7" height="14" viewBox="0 0 7 14"><path d="M0 4.4L3.5 0.9 7 4.4z M0 10L3.5 13.5 7 10z" fill="#1a1a1a"/></svg>
<div class="t" style="left:313.0px;top:228.69px;font-size:11px;line-height:11px;color:#1a1a1a;letter-spacing:0.098px;-webkit-text-stroke-width:0.30px;">Вер<u>х</u>нее:</div>
<div class="t" style="left:313.0px;top:251.69px;font-size:11px;line-height:11px;color:#1a1a1a;letter-spacing:0.131px;-webkit-text-stroke-width:0.30px;">Л<u>е</u>вое:</div>
<div class="t" style="left:313.0px;top:275.69px;font-size:11px;line-height:11px;color:#1a1a1a;letter-spacing:0.190px;-webkit-text-stroke-width:0.30px;">Перепле<u>т</u>:</div>
<div class="t" style="left:508.0px;top:228.69px;font-size:11px;line-height:11px;color:#1a1a1a;letter-spacing:0.365px;-webkit-text-stroke-width:0.30px;"><u>Н</u>ижнее:</div>
<div class="t" style="left:508.0px;top:251.69px;font-size:11px;line-height:11px;color:#1a1a1a;letter-spacing:0.308px;-webkit-text-stroke-width:0.30px;">Пр<u>а</u>вое:</div>
<div class="t" style="left:508.0px;top:275.69px;font-size:11px;line-height:11px;color:#1a1a1a;letter-spacing:0.331px;-webkit-text-stroke-width:0.30px;"><u>П</u>оложение переплета:</div>
<div class="r" style="left:658px;top:271px;width:89px;height:21px;background:#fff;border:1px solid #a0a0a0;box-sizing:border-box;"></div>
<div class="t" style="left:662.0px;top:276.69px;font-size:11px;line-height:11px;color:#1a1a1a;letter-spacing:0.000px;-webkit-text-stroke-width:0.30px;">Слева</div>
<div class="r" style="left:729px;top:272px;width:17px;height:19px;border:1px solid #d6d6d6;border-right-color:#bdbdbd;border-bottom-color:#bdbdbd;background:#fdfdfd;box-sizing:border-box;"></div>
<svg class="r" style="left:733px;top:278.5px;" width="9" height="5" viewBox="0 0 9 5"><path d="M.5 .5l4 4 4-4" fill="none" stroke="#333"/></svg>
<div class="r" style="left:300px;top:215px;width:459px;height:61px;border:4px solid #ff0000;border-radius:11px;box-sizing:border-box;box-shadow:2px 2px 4px rgba(0,0,0,.35), inset 2px 2px 5px rgba(0,0,0,.28);"></div>
<div class="t" style="left:305.0px;top:301.69px;font-size:11px;line-height:11px;color:#1a1a1a;letter-spacing:0.395px;-webkit-text-stroke-width:0.30px;">Ориентация</div>
<div class="r" style="left:377px;top:306px;width:370px;height:1px;background:#dcdcdc;"></div>
<div class="r" style="left:313px;top:320px;width:57px;height:47px;background:#fff;border:1px solid #84888e;box-sizing:border-box;"></div>
<div class="r" style="left:316px;top:323px;width:51px;height:41px;border:2px solid #0a6cd6;box-sizing:border-box;"></div>
<svg class="r" style="left:330px;top:330px;" width="21" height="28" viewBox="0 0 21 28"><path d="M.5 .5h13l7 7v20H.5z M13.5 .5v7h7" fill="#f6f6f6" stroke="#333"/></svg>
<div class="r" style="left:380px;top:320px;width:57px;height:47px;background:#fff;border:1px solid #84888e;box-sizing:border-box;"></div>
<svg class="r" style="left:393px;top:334px;" width="29" height="21" viewBox="0 0 29 21"><path d="M.5 .5h28v13l-7 7H.5z M28.5 13.5h-7v7" fill="#f6f6f6" stroke="#333"/></svg>
<div class="t" style="left:316.0px;top:371.69px;font-size:11px;line-height:11px;color:#1a1a1a;letter-spacing:0.478px;-webkit-text-stroke-width:0.30px;"><u>К</u>нижная</div>
<div class="t" style="left:379.0px;top:371.69px;font-size:11px;line-height:11px;color:#1a1a1a;letter-spacing:0.298px;-webkit-text-stroke-width:0.30px;">А<u>л</u>ьбомная</div>
<div class="t" style="left:305.0px;top:392.69px;font-size:11px;line-height:11px;color:#1a1a1a;letter-spacing:0.194px;-webkit-text-stroke-width:0.30px;">Страницы</div>
<div class="r" style="left:364px;top:398px;width:383px;height:1px;background:#dcdcdc;"></div>
<div class="t" style="left:313.0px;top:416.69px;font-size:11px;line-height:11px;color:#1a1a1a;letter-spacing:0.346px;-webkit-text-stroke-width:0.30px;">не<u>с</u>колько страниц:</div>
<div class="r" style="left:468px;top:411px;width:263px;height:22px;background:#fff;border:1px solid #a0a0a0;box-sizing:border-box;"></div>
<div class="t" style="left:472.0px;top:416.69px;font-size:11px;line-height:11px;color:#1a1a1a;letter-spacing:0.563px;-webkit-text-stroke-width:0.30px;">Обычный</div>
<div class="r" style="left:713px;top:412px;width:17px;height:20px;border:1px solid #d6d6d6;border-right-color:#bdbdbd;border-bottom-color:#bdbdbd;background:#fdfdfd;box-sizing:border-box;"></div>
<svg class="r" style="left:717px;top:419px;" width="9" height="5" viewBox="0 0 9 5"><path d="M.5 .5l4 4 4-4" fill="none" stroke="#333"/></svg>
<div class="t" style="left:304.0px;top:469.69px;font-size:11px;line-height:11px;color:#1a1a1a;letter-spacing:0.449px;-webkit-text-stroke-width:0.30px;">Образец</div>
<div class="r" style="left:356px;top:474px;width:391px;height:1px;background:#dcdcdc;"></div>
<div class="r" style="left:349px;top:488px;width:83px;height:106px;background:#cdcdcd;"></div>
<div class="r" style="left:355px;top:490px;width:71px;height:99px;background:#fff;border:1.5px solid #000;box-sizing:border-box;"></div>
<svg class="r" style="left:355px;top:490px;" width="72" height="99" viewBox="0 0 72 99"><rect x="6" y="2.0" width="61" height="1" fill="#000"/><rect x="2" y="6.0" width="65" height="1" fill="#000"/><rect x="2" y="10.0" width="65" height="1" fill="#000"/><rect x="2" y="14.0" width="21" height="1" fill="#000"/><rect x="6" y="22.0" width="61" height="1" fill="#000"/><rect x="2" y="26.0" width="65" height="1" fill="#000"/><rect x="2" y="30.0" width="65" height="1" fill="#000"/><rect x="2" y="34.0" width="21" height="1" fill="#000"/><rect x="6" y="42.0" width="61" height="1" fill="#000"/><rect x="2" y="46.0" width="65" height="1" fill="#000"/><rect x="2" y="50.0" width="65" height="1" fill="#000"/><rect x="2" y="54.0" width="21" height="1" fill="#000"/><rect x="6" y="62.0" width="61" height="1" fill="#000"/><rect x="2" y="66.0" width="65" height="1" fill="#000"/><rect x="2" y="70.0" width="65" height="1" fill="#000"/><rect x="2" y="74.0" width="21" height="1" fill="#000"/><rect x="6" y="82.0" width="61" height="1" fill="#000"/><rect x="2" y="86.0" width="65" height="1" fill="#000"/><rect x="2" y="90.0" width="65" height="1" fill="#000"/><rect x="2" y="94.0" width="21" height="1" fill="#000"/></svg>
<div class="t" style="left:304.0px;top:616.69px;font-size:11px;line-height:11px;color:#1a1a1a;letter-spacing:0.385px;-webkit-text-stroke-width:0.30px;">Применит<u>ь</u> к:</div>
<div class="r" style="left:386px;top:610px;width:148px;height:22px;background:#fff;border:1px solid #a0a0a0;box-sizing:border-box;"></div>
<div class="t" style="left:390.0px;top:615.69px;font-size:11px;line-height:11px;color:#1a1a1a;letter-spacing:0.120px;-webkit-text-stroke-width:0.30px;">ко всему документу</div>
<div class="r" style="left:516px;top:611px;width:17px;height:20px;border:1px solid #d6d6d6;border-right-color:#bdbdbd;border-bottom-color:#bdbdbd;background:#fdfdfd;box-sizing:border-box;"></div>
<svg class="r" style="left:520px;top:618px;" width="9" height="5" viewBox="0 0 9 5"><path d="M.5 .5l4 4 4-4" fill="none" stroke="#333"/></svg>
<div class="r" style="left:295px;top:651px;width:97px;height:22px;background:#fdfdfd;border:1px solid #d0d0d0;border-radius:4px;box-sizing:border-box;"></div>
<div class="t" style="left:303.0px;top:656.69px;font-size:11px;line-height:11px;color:#1a1a1a;letter-spacing:0.510px;-webkit-text-stroke-width:0.30px;">По у<u>м</u>олчанию</div>
<div class="r" style="left:597px;top:651px;width:74px;height:22px;background:#fdfdfd;border:1.5px solid #0a6cd6;border-radius:4px;box-sizing:border-box;"></div>
<div class="t" style="left:626.0px;top:656.69px;font-size:11px;line-height:11px;color:#1a1a1a;letter-spacing:0.000px;-webkit-text-stroke-width:0.30px;">ОК</div>
<div class="r" style="left:681px;top:651px;width:74px;height:22px;background:#fdfdfd;border:1px solid #d0d0d0;border-radius:4px;box-sizing:border-box;"></div>
<div class="t" style="left:697.0px;top:656.69px;font-size:11px;line-height:11px;color:#1a1a1a;letter-spacing:0.307px;-webkit-text-stroke-width:0.30px;">Отмена</div>
</body></html>
